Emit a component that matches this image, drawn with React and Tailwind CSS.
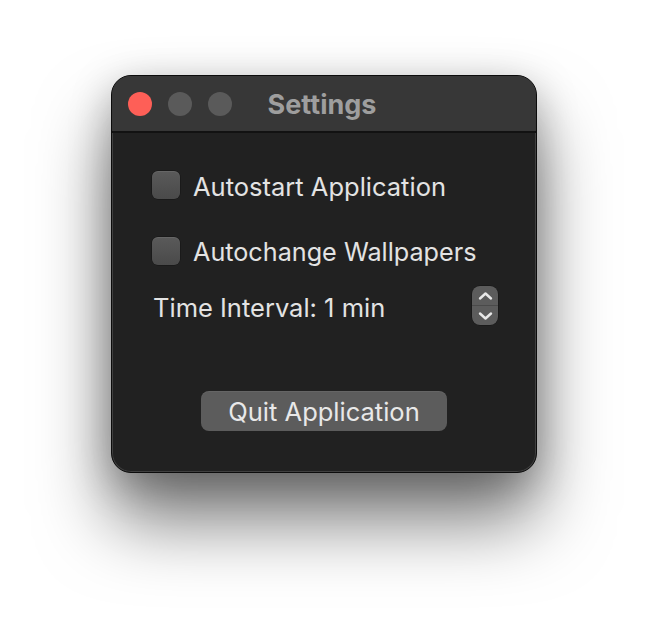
import React from "react";

function Checkbox() {
  return (
    <div className="w-[28px] h-[28px] rounded-[6px] bg-gradient-to-b from-[#5a5a5a] to-[#4a4a4a] shadow-[inset_0_1px_0_rgba(255,255,255,0.08),0_0_0_0.5px_rgba(0,0,0,0.4)] shrink-0" />
  );
}

function Stepper() {
  return (
    <div className="w-[26px] h-[39px] rounded-[8px] bg-[#5c5c5c] flex flex-col overflow-hidden shadow-[0_0_0_0.5px_rgba(0,0,0,0.4)]">
      <div className="flex-1 flex items-center justify-center border-b border-[#4a4a4a]">
        <svg width="15" height="10" viewBox="0 0 15 10" fill="none">
          <path d="M2 7.5 L7.5 2.5 L13 7.5" stroke="#e8e8e8" strokeWidth="2.4" strokeLinecap="round" strokeLinejoin="round" />
        </svg>
      </div>
      <div className="flex-1 flex items-center justify-center">
        <svg width="15" height="10" viewBox="0 0 15 10" fill="none">
          <path d="M2 2.5 L7.5 7.5 L13 2.5" stroke="#e8e8e8" strokeWidth="2.4" strokeLinecap="round" strokeLinejoin="round" />
        </svg>
      </div>
    </div>
  );
}

export default function App() {
  return (
    <div className="w-[648px] h-[620px] bg-white pt-[75px] pl-[111px] font-['Inter','Noto_Sans',sans-serif]">
      <div className="w-[426px] h-[398px] rounded-[20px] bg-[#212121] border border-[#0c0c0c] overflow-hidden flex flex-col shadow-[0_48px_72px_rgba(0,0,0,0.52),0_10px_40px_rgba(0,0,0,0.25),inset_0_0_0_1px_rgba(255,255,255,0.14)]">
        <div className="h-[57px] bg-[#373737] border-b-2 border-[#121212] flex items-center relative shrink-0">
          <div className="flex items-center gap-[16px] pl-[16px] pt-[1px]">
            <div className="w-[24px] h-[24px] rounded-full bg-[#fe5f57]" />
            <div className="w-[24px] h-[24px] rounded-full bg-[#5a5a5a]" />
            <div className="w-[24px] h-[24px] rounded-full bg-[#5a5a5a]" />
          </div>
          <div className="absolute inset-0 flex items-center justify-center pr-[4px] pt-[1px]">
            <span className="text-[27px] font-bold text-[#9e9e9e] leading-none">Settings</span>
          </div>
        </div>
        <div className="flex-1 flex flex-col pl-[40px] pr-[38px] pt-[38px]">
          <div className="flex items-center gap-[13px] h-[28px]">
            <Checkbox />
            <span className="text-[25.5px] text-[#e3e3e3] leading-none pt-[4px]">Autostart Application</span>
          </div>
          <div className="flex items-center gap-[13px] h-[28px] mt-[38px]">
            <Checkbox />
            <span className="text-[25.2px] text-[#e3e3e3] leading-none pt-[4px]">Autochange Wallpapers</span>
          </div>
          <div className="flex items-center justify-between h-[39px] mt-[21px]">
            <span className="text-[25.5px] text-[#e3e3e3] leading-none pl-[1px] pt-[4px]">Time Interval: 1 min</span>
            <Stepper />
          </div>
          <div className="flex justify-center mt-[66px] pr-[2px]">
            <div className="w-[246px] h-[40px] rounded-[8px] bg-[#5c5c5c] flex items-center justify-center shadow-[inset_0_1px_0_rgba(255,255,255,0.06)]">
              <span className="text-[25.5px] text-[#e8e8e8] leading-none pt-[2px]">Quit Application</span>
            </div>
          </div>
        </div>
      </div>
    </div>
  );
}
